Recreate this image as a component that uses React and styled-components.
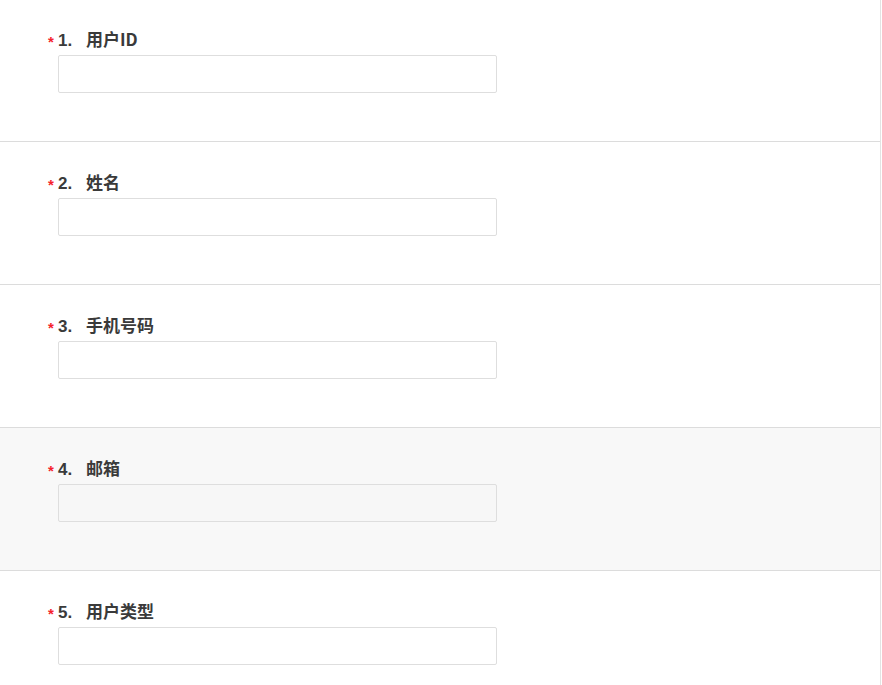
import React from "react";
import styled, { createGlobalStyle } from "styled-components";

const Global = createGlobalStyle`
  html, body { margin: 0; padding: 0; background: #fff; }
  body { font-family: "Liberation Sans", "Noto Sans CJK SC", sans-serif; }
`;

const Form = styled.div`
  width: 880px;
  margin-top: -1px;
  border-right: 1px solid #e3e3e3;
  min-height: 686px;
  background: #fff;
`;

const Section = styled.div`
  height: 143px;
  box-sizing: border-box;
  padding: 29px 0 0 48px;
  border-bottom: 1px solid #dcdcdc;
  background: ${(p) => (p.$active ? "#f8f8f8" : "#fff")};
`;

const Label = styled.div`
  display: flex;
  align-items: baseline;
  height: 22px;
  line-height: 22px;
  font-size: 17px;
  font-weight: bold;
  color: #3a3a3a;
`;

const Star = styled.span`
  align-self: center;
  color: #f5222d;
  font-size: 15px;
  line-height: 10px;
  width: 10px;
  margin-top: 5px;
`;

const Num = styled.span`
  width: 28px;
`;

const Text = styled.span`
  font-family: "Noto Sans CJK SC", "Liberation Sans", sans-serif;
  font-weight: bold;
`;

const Input = styled.input`
  display: block;
  box-sizing: border-box;
  width: 439px;
  height: 38px;
  margin: 5px 0 0 10px;
  border: 1px solid #dedede;
  border-radius: 2px;
  background: ${(p) => (p.$active ? "#f7f7f7" : "#fff")};
  outline: none;
  font-size: 14px;
  padding: 0 10px;
`;

const fields = ["用户ID", "姓名", "手机号码", "邮箱", "用户类型"];

export default function App() {
  return (
    <>
      <Global />
      <Form>
        {fields.map((f, i) => (
          <Section key={f} $active={i === 3}>
            <Label>
              <Star>*</Star>
              <Num>{i + 1}.</Num>
              <Text>{f}</Text>
            </Label>
            <Input $active={i === 3} />
          </Section>
        ))}
      </Form>
    </>
  );
}
